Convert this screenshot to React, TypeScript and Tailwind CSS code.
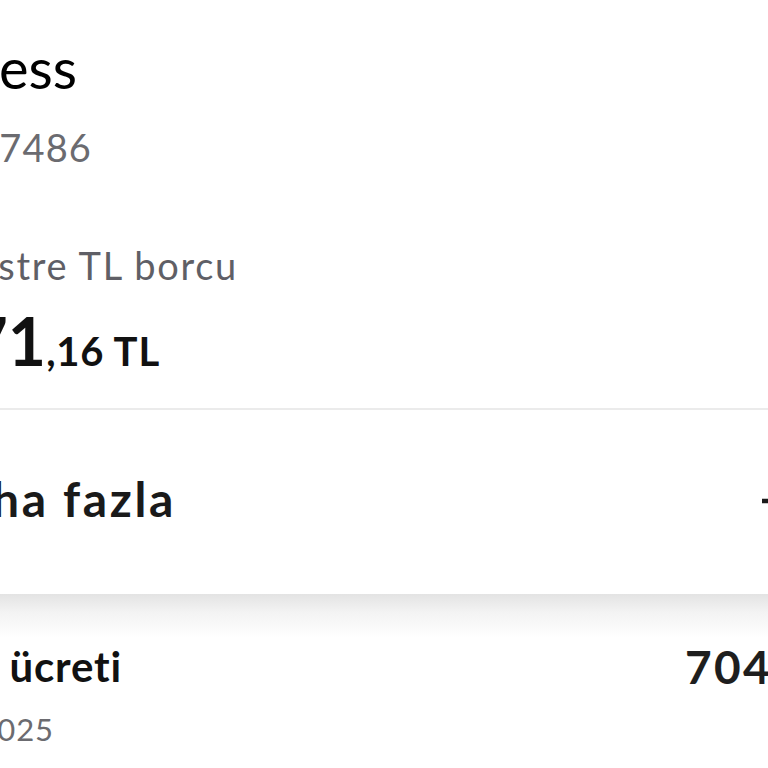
import React from "react";

// Texts are right-aligned in fixed boxes so the start of each line runs off the left edge,
// like the cropped phone screenshot.
const Clip: React.FC<{ w: string; className?: string; children: React.ReactNode }> = ({
  w,
  className = "",
  children,
}) => (
  <div className={`flex justify-end ${w}`}>
    <span className={`whitespace-nowrap leading-none ${className}`}>{children}</span>
  </div>
);

const App: React.FC = () => {
  return (
    <div
      className="w-[768px] h-[768px] overflow-hidden bg-white"
      style={{ fontFamily: "Lato, 'Noto Sans', sans-serif" }}
    >
      <section className="flex flex-col pt-[40px]">
        <Clip w="w-[77px]" className="text-[56px] text-black">
          Axess
        </Clip>
        <Clip w="w-[92px]" className="mt-[32px] text-[38px] text-[#6b6b70] tracking-[0.03em]">
          **** **** 7486
        </Clip>
        <Clip w="w-[238px]" className="mt-[80px] text-[38px] text-[#5f5f66] tracking-[0.045em]">
          Dönem içi ekstre TL borcu
        </Clip>
        <div className="mt-[24px] flex w-[160px] justify-end">
          <div className="flex items-baseline whitespace-nowrap leading-none text-[#111]">
            <span className="text-[66px] font-bold">1.971</span>
            <span className="text-[40px] font-bold tracking-[0.02em]">,16 TL</span>
          </div>
        </div>
        <div className="mt-[34px] h-[2px] bg-[#ebebeb]" />
      </section>

      <section className="flex items-start pt-[65px] pb-[71px] bg-white">
        <Clip w="w-[176px]" className="text-[48px] font-bold text-[#1a1a1a] tracking-[0.055em]">
          Daha fazla
        </Clip>
        <svg
          className="ml-auto -mr-[18px] mt-[14px] h-[24px] w-[24px] text-[#1a1a1a]"
          viewBox="0 0 24 24"
          fill="none"
          stroke="currentColor"
          strokeWidth="4.5"
        >
          <path d="M0 12h24M12 0v24" />
        </svg>
      </section>

      <section className="bg-[linear-gradient(to_bottom,#e3e3e3_0px,#f3f3f3_18px,#ffffff_44px)] pt-[50px]">
        <div className="flex items-start">
          <Clip w="w-[122px]" className="mt-[1px] text-[42px] font-bold text-[#111] tracking-[0.02em]">
            Kart aidat ücreti
          </Clip>
          <span className="ml-[563px] whitespace-nowrap text-[46px] font-bold leading-none text-[#1e1e1e] tracking-[0.05em]">
            704,00 TL
          </span>
        </div>
        <Clip w="w-[54px]" className="mt-[24px] text-[31px] text-[#6b6b70] tracking-[0.03em]">
          12.05.2025
        </Clip>
      </section>
    </div>
  );
};

export default App;
